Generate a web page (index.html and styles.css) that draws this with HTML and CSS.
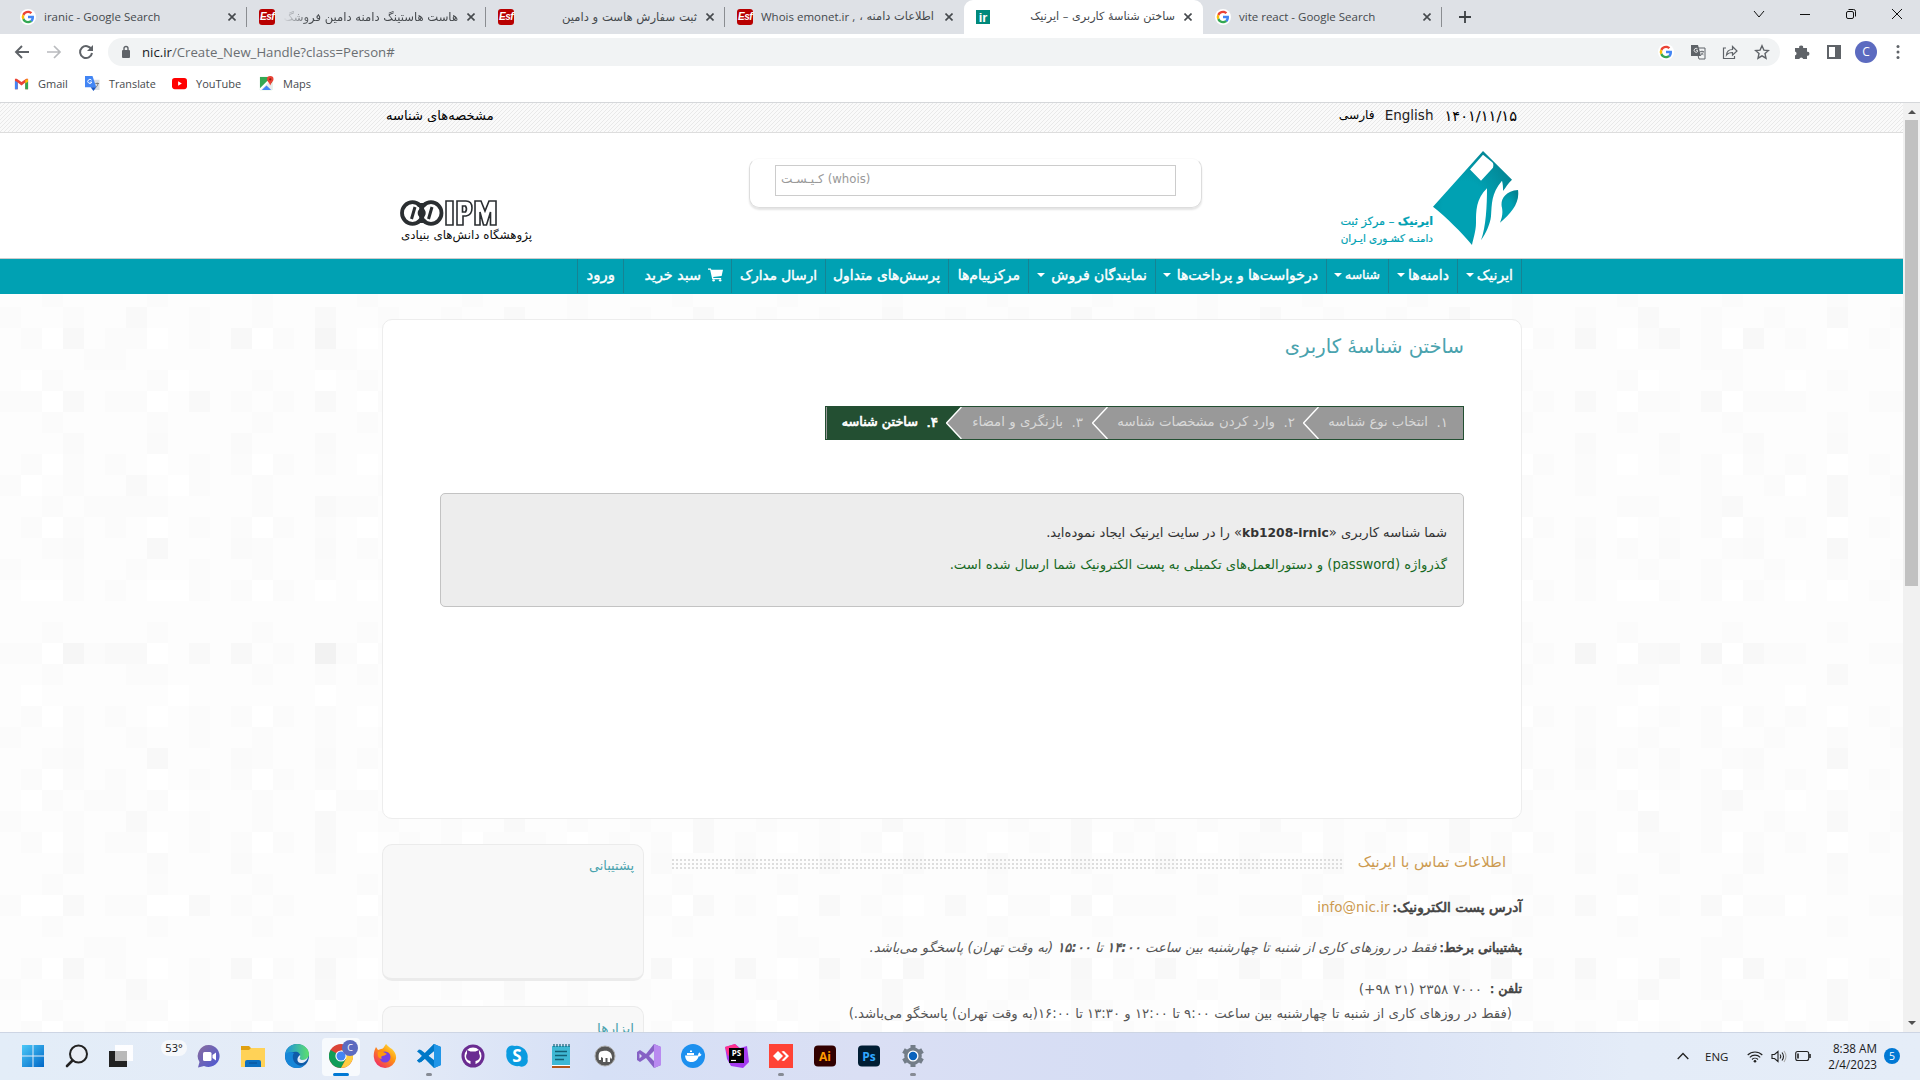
FILE: index.html
```html
<!DOCTYPE html>
<html lang="fa">
<head>
<meta charset="utf-8">
<title>ساختن شناسهٔ کاربری – ایرنیک</title>
<link rel="stylesheet" href="styles.css">
</head>
<body>
<svg width="0" height="0" class="defs">
  <symbol id="g" viewBox="0 0 48 48"><path fill="#fff" d="M24 0a24 24 0 1 0 0 48a24 24 0 0 0 0-48"/><path fill="#EA4335" d="M24 12c3 0 5.600 1 7.700 3l5-5C33.500 7 29 5 24 5 16.500 5 10 9.300 7 15.600l6 4.600C14.500 15.500 18.800 12 24 12z"/><path fill="#4285F4" d="M42 24.500c0-1.500-.1-2.700-.4-4H24v7.600h10.300c-.3 2-1.500 4.500-4 6.300l6 4.600c3.500-3.300 5.700-8.200 5.700-14.500z"/><path fill="#FBBC05" d="M13 27.800a12 12 0 0 1 0-7.600l-6-4.600a19 19 0 0 0 0 16.800z"/><path fill="#34A853" d="M24 43c5 0 9.300-1.700 12.300-4.500l-6-4.600c-1.600 1.100-3.700 1.900-6.300 1.900-5 0-9.500-3.300-11-8l-6 4.600C10 38.700 16.500 43 24 43z"/></symbol>
  <symbol id="x" viewBox="0 0 8 8"><path d="M.5.5l7 7M7.500.5l-7 7" stroke="#45494d" stroke-width="1.600"/></symbol>
  <symbol id="tr" viewBox="0 0 16 16"><path d="M6 4h9v11H9z" fill="none" stroke="#5f6368"/><path d="M1 1h7l3 11H1z" fill="#5f6368"/><path d="M7.500 4.800a2 2 0 1 0 0 3V6.300H6" stroke="#fff" fill="none" stroke-width=".8"/><path d="M10 7.500h4M12 6.500v1M11 11c1.500-.8 2-1.700 2.200-3M11 8.500c.6 1.200 1.500 2 2.500 2.300" stroke="#5f6368" fill="none" stroke-width=".8"/></symbol>
</svg>

<div class="tabs">
  <div class="tab"><svg class="fav"><use href="#g"/></svg><span class="tt"><span class="m en">iranic - Google Search</span></span><svg class="cl"><use href="#x"/></svg></div>
  <div class="tab"><b class="fav esf">Esf</b><span class="tt rtl fade"><span class="m fa">هاست هاستینگ دامنه دامین فروشگ</span></span><svg class="cl"><use href="#x"/></svg></div>
  <div class="tab"><b class="fav esf">Esf</b><span class="tt rtl"><span class="m fa">ثبت سفارش هاست و دامین</span></span><svg class="cl"><use href="#x"/></svg></div>
  <div class="tab nosep"><b class="fav esf">Esf</b><span class="tt"><span class="m en">Whois emonet.ir ,</span><span class="m fa mix" dir="rtl">اطلاعات دامنه ،</span></span><svg class="cl"><use href="#x"/></svg></div>
  <div class="tab nosep on"><b class="fav irf">ir</b><span class="tt rtl"><span class="m fa t5">ساختن شناسهٔ کاربری – ایرنیک</span></span><svg class="cl"><use href="#x"/></svg></div>
  <div class="tab"><svg class="fav"><use href="#g"/></svg><span class="tt"><span class="m en">vite react - Google Search</span></span><svg class="cl"><use href="#x"/></svg></div>
  <svg class="plus" viewBox="0 0 12 12"><path d="M6 0v12M0 6h12" stroke="#3c4043" stroke-width="1.800"/></svg>
  <div class="win">
    <svg viewBox="0 0 12 12"><path d="M1 3l5 6 5-6" fill="none" stroke="#111"/></svg>
    <svg viewBox="0 0 12 12"><path d="M1 6.500h10" stroke="#111"/></svg>
    <svg viewBox="0 0 12 12"><rect x="1.500" y="3.500" width="7" height="7" rx="1.500" fill="none" stroke="#111"/><path d="M3.500 1.500h5a2 2 0 0 1 2 2v5" fill="none" stroke="#111"/></svg>
    <svg viewBox="0 0 12 12"><path d="M1 1l10 10M11 1L1 11" stroke="#111"/></svg>
  </div>
</div>

<div class="tools">
  <svg class="ti" viewBox="0 0 16 16"><path d="M15 8H2M8 2L2 8l6 6" fill="none" stroke="#5f6368" stroke-width="1.900"/></svg>
  <svg class="ti" viewBox="0 0 16 16"><path d="M1 8h13M8 2l6 6-6 6" fill="none" stroke="#b9bbbe" stroke-width="1.700"/></svg>
  <svg class="ti" viewBox="0 0 16 16"><path d="M13.500 5.500A6 6 0 1 0 14 9" fill="none" stroke="#5f6368" stroke-width="2"/><path d="M15 1v6H9z" fill="#5f6368"/></svg>
  <div class="omni">
    <svg class="lock" viewBox="0 0 10 14"><rect x="1" y="5" width="8" height="8" rx="1" fill="#5f6368"/><path d="M3 5V3.500a2 2 0 0 1 4 0V5" fill="none" stroke="#5f6368" stroke-width="1.400"/></svg>
    <span class="m en url"><i>nic.ir</i>/Create_New_Handle?class=Person#</span>
    <svg class="oi"><use href="#g"/></svg>
    <svg class="oi"><use href="#tr"/></svg>
    <svg class="oi" viewBox="0 0 16 16"><path d="M4 4H1.500v10.500h11V12M4.500 11c.3-4 2.500-5.500 6-5.500V2.500L15 7l-4.500 4.200V8.500C8 8.500 6 9 4.500 11z" fill="none" stroke="#5f6368" stroke-width="1.200"/></svg>
    <svg class="oi" viewBox="0 0 16 16"><path d="M8 1.800l1.900 4.300 4.600.4-3.500 3.100 1 4.600L8 11.800l-4 2.400 1-4.600L1.500 6.500l4.600-.4z" fill="none" stroke="#5f6368" stroke-width="1.400"/></svg>
  </div>
  <div class="ext">
    <svg class="oi" viewBox="0 0 16 16"><path fill="#5f6368" d="M1 4h4.200a2 2 0 1 1 3.900 0H13v3.800a2 2 0 1 1 0 3.900V15H9.200a2 2 0 0 0-3.900 0H1v-3.500a2 2 0 0 0 0-3.900z"/></svg>
    <svg class="oi" viewBox="0 0 16 16"><path fill="#5f6368" d="M1 1h14v14H1zM3 3v10h6V3z" fill-rule="evenodd"/></svg>
    <b class="ava">C</b>
    <svg class="oi" viewBox="0 0 16 16"><g fill="#5f6368"><circle cx="8" cy="2.500" r="1.500"/><circle cx="8" cy="8" r="1.500"/><circle cx="8" cy="13.500" r="1.500"/></g></svg>
  </div>
</div>

<div class="marks en">
  <a><svg viewBox="0 0 16 16"><path d="M1 3v11h3V7l4 3 4-3v7h3V3h-2L8 6.500 3 3z" fill="#ea4335"/><path d="M1 5v9h3V7z" fill="#4285f4"/><path d="M15 5v9h-3V7z" fill="#34a853"/><path d="M12 4v4l3-2V3.500z" fill="#fbbc04"/></svg>Gmail</a>
  <a class="b2"><svg viewBox="0 0 16 16"><path d="M5 4h10.500v11H9z" fill="#dadce0"/><path d="M0 0h8l4 12H0z" fill="#4285f4"/><path d="M6 12h6l-3 4z" fill="#1a57c4"/><path d="M7 4.500a2.200 2.200 0 1 0 .3 2H5" stroke="#fff" fill="none"/><path d="M11 8h4M13 7v1M11.500 12c1.500-1 2-2 2.200-4" stroke="#777" fill="none"/></svg>Translate</a>
  <a class="b3"><svg viewBox="0 0 16 16"><rect y="2" width="16" height="12" rx="3" fill="#f00"/><path d="M6.500 5.500v5l4-2.500z" fill="#fff"/></svg>YouTube</a>
  <a class="b4"><svg viewBox="0 0 16 16"><path d="M1 1h13v14H1z" fill="#34a853"/><path d="M1 15L11 5l3 3v7z" fill="#e8eaed"/><path d="M3 15l5-5 5 5z" fill="#4285f4"/><path d="M1 13L9 5l1.500 1.500L2 15H1z" fill="#fff"/><path d="M12 0a3.500 3.500 0 0 0-3.500 3.500C8.500 6 11 7 12 10c1-3 3.500-4 3.500-6.500A3.500 3.500 0 0 0 12 0z" fill="#ea4335"/><circle cx="12" cy="3.500" r="1.200" fill="#8c1d14"/></svg>Maps</a>
</div>

<div class="view">
 <div class="page" dir="rtl">
  <div class="strip"><div class="wrap">
    <span class="m d1">۱۴۰۱/۱۱/۱۵</span><span class="m d2">English</span><span class="m d3">فارسی</span><span class="m d4">مشخصه‌های شناسه</span>
  </div></div>
  <div class="head"><div class="wrap">
    <div class="logo">
      <svg viewBox="0 0 86 101" width="86" height="94" preserveAspectRatio="none"><defs><radialGradient id="lg" cx=".4" cy=".6" r=".7"><stop offset=".4" stop-color="#00a1b3"/><stop offset="1" stop-color="#048391"/></radialGradient></defs><path fill="url(#lg)" d="M50 0L79 31C75 35 73 39 70 43C70 39 70 36 69 32C58 46 59 57 58 70C57 79 53 88 48 96C53 82 54 58 54 40C43 51 43 65 43 77C43 86 40 95 39 101C28 87 14 72 0 60z"/><path fill="#fff" d="M50 4L37 20L48 32L60 18C61 14 60 12 58 11z"/><path fill="url(#lg)" d="M85 42C71 43 67 54 69 61C70 67 69 72 67 77C78 67 87 56 85 42z"/></svg>
      <div class="ltx"><span class="m l1"><b>ایرنیک</b> – مرکز ثبت</span><span class="m l2">دامنـه کشـوری ایـران</span></div>
    </div>
    <div class="sbox"><div class="inp" dir="ltr"><span class="m s1" dir="rtl">کـیـسـت</span><span class="m s2">(whois)</span></div></div>
    <div class="ipm">
      <svg viewBox="0 0 98 26" width="98" height="26"><g fill="none" stroke="#2a2e31" stroke-width="3.800"><ellipse cx="12.500" cy="13" rx="10.500" ry="10.800"/><ellipse cx="31" cy="13" rx="10.500" ry="10.800"/></g><path d="M15 3h13l-3 4h-7zM16 23h12l-3-4h-6z" fill="#2a2e31"/><circle cx="21.700" cy="13" r="4" fill="#2a2e31"/><path d="M15 7l-3.500 12M32 7l-3.500 12" stroke="#2a2e31" stroke-width="3"/><g fill="#fff" stroke="#2a2e31" stroke-width="1.600"><path d="M46 1h7v24h-7zM57 1h9q6 0 6 7t-6 8h-3v9h-6zM62.500 6v6h3q2-3 0-6zM75 1h6l4 10 4-10h7v24h-5.500V12L86.500 25h-3L80 12v13h-5z"/></g></svg>
      <span class="m ip">پژوهشگاه دانش‌های بنیادی</span>
    </div>
  </div></div>
  <div class="nav"><div class="wrap">
    <a class="n1"><span class="m">ایرنیک</span><i></i></a><a class="n2"><span class="m">دامنه‌ها</span><i></i></a><a class="n3"><span class="m">شناسه</span><i></i></a><a class="n4"><span class="m">درخواست‌ها و پرداخت‌ها</span><i></i></a><a class="n5"><span class="m">نمایندگان فروش</span><i></i></a><a class="n6"><span class="m">مرکزپیام‌ها</span></a><a class="n7"><span class="m">پرسش‌های متداول</span></a><a class="n8"><span class="m">ارسال مدارک</span></a><a class="n9"><svg viewBox="0 0 16 14"><path fill="#fff" d="M0 0h3l.6 1.500H16L14.500 8l-9 1 .3 1.200H14v1.200H4.500L2.300 1.300H0z"/><circle cx="6" cy="12.700" r="1.300" fill="#fff"/><circle cx="13" cy="12.700" r="1.300" fill="#fff"/></svg><span class="m">سبد خرید</span></a><a class="n10"><span class="m">ورود</span></a>
  </div></div>
  <div class="body">
   <div class="card">
    <h1><span class="m">ساختن شناسهٔ کاربری</span></h1>
    <div class="steps">
      <div class="st s-a"><span class="no">۱.</span><span class="m">انتخاب نوع شناسه</span></div><svg class="ar" viewBox="0 0 16 32"><path d="M15.500 0L.5 16l15 16" fill="none" stroke="#fff" stroke-width="1.500"/></svg>
      <div class="st s-b"><span class="no">۲.</span><span class="m">وارد کردن مشخصات شناسه</span></div><svg class="ar" viewBox="0 0 16 32"><path d="M15.500 0L.5 16l15 16" fill="none" stroke="#fff" stroke-width="1.500"/></svg>
      <div class="st s-c"><span class="no">۳.</span><span class="m">بازنگری و امضاء</span></div><svg class="ar" viewBox="0 0 16 32"><path d="M0 0h16L.5 16 16 32H0z" fill="#234f32"/><path d="M15.500 0L.5 16l15 16" fill="none" stroke="#fff" stroke-width="1.500"/></svg>
      <div class="st s-d"><span class="no">۴.</span><span class="m">ساختن شناسه</span></div>
    </div>
    <div class="msg">
      <p><span class="m">شما شناسه کاربری «<b>kb1208-irnic</b>» را در سایت ایرنیک ایجاد نموده‌اید.</span></p>
      <p class="gr"><span class="m">گذرواژه (password) و دستورالعمل‌های تکمیلی به پست الکترونیک شما ارسال شده است.</span></p>
    </div>
   </div>
   <div class="low">
    <div class="info">
      <h2><span class="m">اطلاعات تماس با ایرنیک</span><i class="dots"></i></h2>
      <p><b class="m c1">آدرس پست الکترونیک:</b><span class="m mail">info@nic.ir</span></p>
      <p><b class="m c2">پشتیبانی برخط:</b><span class="m it">فقط در روزهای کاری از شنبه تا چهارشنبه بین ساعت <b>۱۴:۰۰</b> تا <b>۱۵:۰۰</b> (به وقت تهران) پاسخگو می‌باشد.</span></p>
      <p><b class="m c3">تلفن :</b><span class="m ph" dir="ltr">(+۹۸ ۲۱) ۲۳۵۸ ۷۰۰۰</span></p>
      <p class="last"><span class="m">(فقط در روزهای کاری از شنبه تا چهارشنبه بین ساعت ۹:۰۰ تا ۱۲:۰۰ و ۱۳:۳۰ تا ۱۶:۰۰(به وقت تهران) پاسخگو می‌باشد.)</span></p>
    </div>
    <div class="side"><div class="sc"><span class="m">پشتیبانی</span></div><div class="sc sc2"><span class="m">ابزارها</span></div></div>
   </div>
  </div>
 </div>
 <div class="sb"><i class="up"></i><div class="th"></div><i class="dn"></i></div>
</div>

<div class="task en">
  <div class="ic"><svg viewBox="0 0 24 24"><defs><linearGradient id="w" x2="1" y2="1"><stop stop-color="#4cc9f8"/><stop offset="1" stop-color="#0067c7"/></linearGradient></defs><path fill="url(#w)" d="M1 1h10.500v10.500H1zM12.500 1H23v10.500H12.500zM1 12.500h10.500V23H1zM12.500 12.500H23V23H12.500z"/></svg></div>
  <div class="ic"><svg viewBox="0 0 24 24"><circle cx="13.500" cy="10" r="8.500" fill="#e9edf4" stroke="#222" stroke-width="2"/><path d="M7.500 16.500L2 22" stroke="#222" stroke-width="2.600" stroke-linecap="round"/></svg></div>
  <div class="ic"><svg viewBox="0 0 24 24"><path d="M0 7h18v16H0z" fill="#222"/><path d="M6 1h18v16H6z" fill="#fff" opacity=".9"/><path d="M6 7h12v10H6z" fill="#b9b9b9"/></svg></div>
  <div class="ic wx"><span>53°</span></div>
  <div class="ic"><svg viewBox="0 0 24 24"><defs><linearGradient id="ch" x2="1" y2="1"><stop stop-color="#8a6d9c"/><stop offset="1" stop-color="#4a57d6"/></linearGradient></defs><path fill="url(#ch)" d="M12 1a11 11 0 1 1-5 21l-6 1.500L2.500 18A11 11 0 0 1 12 1z"/><rect x="6" y="8" width="8.500" height="9" rx="1.500" fill="#fff"/><path d="M15.500 11l3.500-2.500v8L15.500 14z" fill="#fff"/></svg></div>
  <div class="ic"><svg viewBox="0 0 24 24"><path d="M0 2h8l3 3h13v6H0z" fill="#e0a010"/><path d="M0 6h8l2-2h14v19H0z" fill="#ffd257"/><path d="M4 23v-5q0-2 2-2h12q2 0 2 2v5z" fill="#0c6fc0"/><path d="M8 19h8" stroke="#0a4f92"/></svg></div>
  <div class="ic"><svg viewBox="0 0 24 24"><defs><linearGradient id="ed" x2="1"><stop stop-color="#1b8fe0"/><stop offset="1" stop-color="#5ee06c"/></linearGradient></defs><circle cx="12" cy="12" r="12" fill="#0f5ba8"/><path d="M0 12C0 5 5 0 12 0s12 5 12 10c0 4-3 6-6 6-2 0-4-1-3-3 1-4-3-6-6-5-4 0-8 2-9 4z" fill="url(#ed)"/><path d="M0 12c1-4 6-5 9-3-2 2-2 9 4 12 2 1 5 1 7-1-2 3-5 4-8 4C5 24 0 19 0 12z" fill="#1686d8"/><path d="M15 11c1 2-1 3 0 4 2 2 6 1 8-2-1 4-4 6-7 6-4 0-5-5-1-8z" fill="#e4ecf7"/></svg></div>
  <div class="ic act"><svg viewBox="0 0 24 24"><circle cx="12" cy="12" r="12" fill="#db4437"/><path d="M1.600 6A12 12 0 0 0 12 24l5-9-5-3z" fill="#0f9d58"/><path d="M12 24A12 12 0 0 0 22.400 6H12l5 9z" fill="#ffcd40"/><circle cx="12" cy="12" r="5.600" fill="#fff"/><circle cx="12" cy="12" r="4.500" fill="#4285f4"/></svg><b class="bd">C</b><u class="run on"></u></div>
  <div class="ic"><svg viewBox="0 0 24 24"><defs><linearGradient id="ff" x1="1" y1="0" x2=".2" y2="1"><stop stop-color="#fff44f"/><stop offset=".45" stop-color="#ff980e"/><stop offset="1" stop-color="#f0256b"/></linearGradient></defs><path fill="url(#ff)" d="M13 0c3 3 4 4 6 5 3 3 4.500 6 4 9.500A11 11 0 0 1 12 24 11.500 11.500 0 0 1 .8 13C.5 9 1.500 6 3 3l2 3 3-1c2 0 3-2 5-5z"/><circle cx="12" cy="13" r="5.500" fill="#7542e5"/><path d="M5 8c3-1 6 0 9 2-2 1-3 2-5 2-1 1-1 2 0 3-3 0-5-3-4-7z" fill="#ff980e"/></svg></div>
  <div class="ic"><svg viewBox="0 0 24 24"><path d="M17 0l7 3v18l-7 3L2 9l-2-1.500 2-2 2 .5 13 10V7L4 18l-2 .5-2-2L2 15z" fill="#0078c8"/><path d="M17 0L2 15l-2 1.500 2 2 2-.5L17 7z" fill="#0078c8"/><path d="M17 0l7 3v18l-7 3z" fill="#2196e8"/></svg><u class="run"></u></div>
  <div class="ic"><svg viewBox="0 0 24 24"><circle cx="12" cy="12" r="11.500" fill="#6a2c91"/><circle cx="12" cy="12" r="8.500" fill="#fff"/><path d="M9.500 21v-4c-5-1-5-5-3.500-7.500L6 6l3.500 1.500h5L18 6v3.500c1.500 2.500 1.500 6.500-3.500 7.500v4z" fill="#6a2c91"/></svg></div>
  <div class="ic"><svg viewBox="0 0 24 24"><path d="M7 1.500A6 6 0 0 0 1.500 9 11 11 0 0 0 14 22a6 6 0 0 0 8.500-7A11 11 0 0 0 10 2z" fill="#0a9be0"/><text x="12" y="18" class="it-s" fill="#fff" font-size="17">S</text></svg></div>
  <div class="ic"><svg viewBox="0 0 24 24"><path d="M3 2h18v19H3z" fill="#3fb8d4"/><path d="M3 21h18v3H3z" fill="#b4571a"/><path d="M3 21h18v1H3z" fill="#fff"/><path d="M5 0v3M8 0v3M11 0v3M14 0v3M17 0v3M20 0v3" stroke="#135f75" stroke-width="1.200"/><path d="M6 7.500h12M6 11.500h12M6 15.500h9" stroke="#135f75" stroke-width="1.400"/></svg></div>
  <div class="ic"><svg viewBox="0 0 24 24"><circle cx="12" cy="12" r="10" fill="#575757" stroke="#aaa"/><path d="M6 16c-1-6 0-9 4-9 5-1 9 1 9 7l-1 1-1-2v5h-2.500v-4h-2v4H10v-4l-2-1v3z" fill="#fff"/></svg></div>
  <div class="ic"><svg viewBox="0 0 24 24"><path d="M17 0l7 3v18l-7 3L9 14l-6 4-3-2V8l3-2 6 4z" fill="#8661c5"/><path d="M17 0l7 3v18l-7 3z" fill="#b98af0"/><path d="M17 7v10l-5-5zM2.500 9.500v5L5 12z" fill="#dbe2f5"/></svg></div>
  <div class="ic"><svg viewBox="0 0 24 24"><circle cx="12" cy="12" r="12" fill="#1d90ef"/><path d="M4 11.500h13c0-2 1-3 2-3 0 1 .5 2 1.500 2-.5 1.500-2 2-3 2-1 4-4 5.500-7 5.500-4 0-6-2-6.500-6.500zM6 9h7v2H6zM9 6.500h2V8H9z" fill="#fff"/></svg></div>
  <div class="ic"><svg viewBox="0 0 24 24"><path d="M0 3l10-3 5 4 7-2 2 16-6 6-12-2-4-7z" fill="#a53cf0"/><path d="M0 3l10-3 4 4-11 8z" fill="#ff318c"/><path d="M4 4h15v15H4z" fill="#000"/><text x="11.500" y="11.500" class="it-s" fill="#fff" font-size="8">PS</text><path d="M6 16.500h5" stroke="#fff" stroke-width="1.200"/></svg></div>
  <div class="ic"><svg viewBox="0 0 24 24"><path d="M0 0h24v24H0z" fill="#ff4336"/><path d="M4 12l5-5 5 5-5 5z" fill="#fff"/><path d="M12.500 7.500L15 7l5 5-5 5-2.500-.5L17 12z" fill="#fff"/></svg><u class="run"></u></div>
  <div class="ic"><svg viewBox="0 0 24 24"><rect x="1" y="1.500" width="22" height="21" rx="4" fill="#310000"/><text x="12" y="16.500" class="it-s" fill="#ff9a00" font-size="12">Ai</text></svg></div>
  <div class="ic"><svg viewBox="0 0 24 24"><rect x="1" y="1.500" width="22" height="21" rx="4" fill="#001d33"/><text x="12" y="16.500" class="it-s" fill="#31a8ff" font-size="12">Ps</text></svg></div>
  <div class="ic"><svg viewBox="0 0 24 24"><circle cx="12" cy="12" r="6.800" fill="none" stroke="#737d88" stroke-width="4"/><g stroke="#737d88" stroke-width="5"><path d="M12 1v3M12 20v3M2.500 6.500L5 8M19 16l2.500 1.500M2.500 17.500L5 16M19 8l2.500-1.500"/></g><circle cx="12" cy="12" r="5.500" fill="#fff"/><circle cx="12" cy="12" r="4.200" fill="#0a63bd"/></svg><u class="run"></u></div>
  <div class="tray">
    <svg class="tc" viewBox="0 0 12 8"><path d="M.7 7L6 1.500 11.300 7" fill="none" stroke="#222" stroke-width="1.300"/></svg>
    <span class="eng">ENG</span>
    <svg class="t1" viewBox="0 0 16 13"><g fill="none" stroke="#222" stroke-width="1.100"><path d="M.7 5a10.300 10.300 0 0 1 14.600 0M2.800 7.300a7.300 7.300 0 0 1 10.400 0M5 9.500a4.300 4.300 0 0 1 6 0"/></g><circle cx="8" cy="11.300" r="1.300" fill="#222"/></svg>
    <svg class="t2" viewBox="0 0 16 13"><g fill="none" stroke="#222" stroke-width="1.100"><path d="M1 4.500h2.500L7 1.500v10L3.500 8.500H1zM9 4.500q1.500 2 0 4M11 2.500q3 4 0 8"/><path d="M13 1q4 5.500 0 11" stroke="#aaa"/></g></svg>
    <svg class="t3" viewBox="0 0 16 12"><rect x=".7" y="1.500" width="13" height="9" rx="2" fill="none" stroke="#222" stroke-width="1.100"/><path d="M3 3.500v5M15 4v4" stroke="#222" stroke-width="1.600"/></svg>
    <div class="clock"><span>8:38 AM</span><span>2/4/2023</span></div>
    <b class="nb">5</b>
  </div>
</div>
</body>
</html>
```
FILE: styles.css
```css
*{box-sizing:border-box}
body{margin:0;width:1920px;height:1080px;overflow:hidden;display:flex;flex-direction:column;font-family:"DejaVu Sans",sans-serif;font-size:12px;color:#333;background:#fff}
.defs{display:none}
svg{flex:none;display:block}
h1,h2,p{margin:0;font-weight:400}
.en{font-family:"Open Sans","Noto Sans",sans-serif}
.m{white-space:nowrap;display:inline-block}

/* browser chrome */
.tabs{height:34px;flex:none;background:#dee1e6;display:flex;padding-left:8px;align-items:center;color:#45494d}
.tab{width:239px;height:34px;display:flex;align-items:center;padding-left:12px;position:relative}
.tab::after{content:"";width:1px;height:20px;background:#8a8d91;margin-left:auto}
.nosep::after{display:none}
.tab .m{margin-top:-1px}
.tab .en{font-size:11.500px}
.tab .fa{font-size:11.600px}
.tab .t5{font-size:11.250px}
.tab .mix{margin-left:4px;font-size:11.400px}
.fav{width:16px;height:16px;flex:none}
.esf{background:#b80000;border-radius:3px;color:#fff;font:italic bold 10px/16px "Liberation Sans",sans-serif;text-align:center;letter-spacing:-.5px}
.irf{background:#00897b;color:#fff;font:bold 13px/15px "Liberation Sans",sans-serif;text-align:center;height:14px;width:14px;margin-right:2px}
.tt{width:175px;margin-left:8px;display:flex;white-space:nowrap}
.rtl{direction:rtl}
.fade{-webkit-mask-image:linear-gradient(to right,transparent,#000 28px)}
.cl{width:8px;height:8px;margin-left:9px}
.on{background:#fff;border-radius:9px 9px 0 0}
.plus{width:12px;height:12px;margin-left:17px}
.win{display:flex;margin-left:auto;gap:34px;padding:0 17px 6px 0}
.win svg{width:12px;height:12px}
.tools{height:36px;flex:none;display:flex;align-items:center;padding-left:14px;background:#fff}
.ti{width:16px;height:16px;margin-right:16px}
.omni{width:1672px;height:28px;margin-left:-2px;border-radius:14px;background:#f1f3f4;display:flex;align-items:center;padding:0 10px 0 13px;color:#6a6e72}
.lock{width:10px;height:14px;margin-right:11px}
.url{font-size:13.200px;margin-right:auto}
.url i{font-style:normal;color:#202124}
.oi{width:16px;height:16px;flex:none}
.omni .oi{margin-left:16px}
.ext{display:flex;align-items:center;gap:16px;margin-left:14px}
.ava{width:22px;height:22px;border-radius:50%;background:#5c6bc0;color:#fff;font:12px/22px "Open Sans",sans-serif;text-align:center;margin:0 -3px}
.marks{height:33px;flex:none;border-bottom:1px solid #d5d7da;display:flex;align-items:center;padding:0 0 5px 14px;color:#45494d;font-size:11px}
.marks a{display:flex;align-items:center;width:71px}
.marks svg{width:15px;height:15px;margin-right:9px}
.marks .b2{width:87px;font-size:10.800px}
.marks .b3{width:87px}

/* site */
.view{flex:1;min-height:0;display:flex;overflow:hidden}
.page{width:1903px;overflow:hidden;display:flex;flex-direction:column}
.wrap{width:1140px;margin:0 381px 0 auto;display:flex}
.strip{height:30px;flex:none;border-bottom:1px solid #ddd;background:linear-gradient(135deg,#e9e9e9 12.500%,#fafafa 12.500% 37.500%,#fafafa 50%,#e9e9e9 50% 62.500%,#fafafa 62.500%) 0 0/4px 4px;color:#000}
.strip .wrap{align-items:center;height:24px;padding:0 5px 0 4px}
.d1{font-size:14.600px}
.d2{font-size:13.500px;margin-right:11px;color:#222}
.d3{font-size:12.250px;margin-right:10px}
.d4{font-size:13.100px;margin-right:auto}
.head{height:126px;flex:none;border-bottom:1px solid #ccc}
.head .wrap{padding-right:3px}
.logo{display:flex;padding-top:18px;width:178px;color:#00a1b3}
.ltx{padding-top:63px;width:92px;display:flex;flex-direction:column;-webkit-text-stroke:.2px #00a1b3}
.ltx .m{height:16px;line-height:16px}
.l1{font-size:11.200px}.l2{font-size:10.400px}
.sbox{width:453px;height:50px;margin:25px 139px 0 217px;border:1px solid #ddd;border-top-color:#fafafa;border-radius:10px;box-shadow:0 2px 2px #e4e4e4;padding:6px 25px 0}
.inp{width:401px;height:31px;border:1px solid #ccc;display:flex;align-items:center;padding:0 5px 3px;color:#999;gap:4px}
.s1{font-size:12.100px}.s2{font-size:11.700px}
.ipm{width:132px;padding-top:67px;color:#111}
.ipm svg{margin-right:34px}
.ip{font-size:11.850px;line-height:18px}
.nav{height:35px;flex:none;background:#00a1b3;color:#fff}
.nav a{height:34px;border-left:1px solid #178393;display:flex;align-items:center;padding:0 8px 3px 0;flex:none;font-size:14px;-webkit-text-stroke:.4px #fff}
.nav i{border:4px solid transparent;border-top:4px solid #fff;border-bottom:0;margin-right:3px}
.nav a.n1{width:65px;border-right:1px solid #178393}.nav .n2{width:69px}.nav .n3{width:62px;font-size:12.400px}.nav .n4{width:171px}.nav .n5{width:127px}.nav .n6{width:80px}.nav .n7{width:123px;font-size:13.850px}.nav .n8{width:94px;font-size:13.600px}.nav .n9{width:108px;font-size:14.300px;gap:7px}.nav .n10{width:46px;font-size:15px}
.nav .n4 i,.nav .n5 i{margin-right:6px}
.n9 svg{width:15px;height:14px}
.body{flex:1;padding-top:25px;background:
 conic-gradient(at 21px 21px,transparent 75%,rgba(0,0,0,.009) 0) 0 13px/63px 84px,
 conic-gradient(at 21px 21px,transparent 75%,#fff 0) 42px 34px/105px 63px,
 conic-gradient(at 21px 21px,transparent 75%,#fff 0) 21px 76px/147px 105px,
 conic-gradient(at 21px 21px,transparent 75%,rgba(0,0,0,.01) 0) 63px 34px/84px 105px,
 conic-gradient(at 42px 21px,transparent 75%,rgba(0,0,0,.009) 0) 84px 55px/231px 147px,
 conic-gradient(at 21px 42px,transparent 75%,rgba(0,0,0,.009) 0) 126px 13px/189px 168px,
 conic-gradient(at 21px 21px,transparent 75%,rgba(0,0,0,.008) 0) 42px 76px/105px 42px,
 conic-gradient(at 21px 21px,transparent 75%,rgba(0,0,0,.006) 0) 21px 34px/42px 63px,
 #fdfdfd}
.card{width:1140px;height:500px;margin:0 381px 0 auto;background:#fff;border:1px solid #ededed;border-radius:10px;padding:7px 57px 0}
h1{height:40px;line-height:40px;color:#4aa3ae;font-size:19.600px}
.steps{width:639px;height:34px;margin-top:39px;border:1px solid #234f32;display:flex;background:#999;color:#d8d8d8}
.st{display:flex;align-items:center;padding-bottom:3px;flex:none}
.no{width:11px;font-size:13.500px;margin-left:9px;white-space:nowrap}
.s-a{width:144px;padding-right:15px;font-size:13.150px}
.s-b{width:195px;padding-right:8px;font-size:13.300px}
.s-c{width:130px;padding-right:9px;font-size:13.350px}
.s-d{width:119px;padding-right:8px;background:#234f32;color:#fff;font-size:12.800px;-webkit-text-stroke:.7px #fff}
.ar{width:16px;height:32px}
.msg{width:1024px;height:114px;margin-top:53px;background:#ededed;border:1px solid #c3c3c3;border-radius:5px;padding:23px 16px 0;font-size:13.170px;color:#333}
.msg b{font-size:12.300px}
.msg p{height:32px;line-height:32px}
.msg .gr{color:#17691f}
.low{width:1140px;margin:25px 381px 0 auto;display:flex;justify-content:space-between;color:#555}
.info{width:850px}
h2{display:flex;align-items:center;height:34px;padding-right:16px;color:#cc9a50;font-size:14.800px;gap:14px}
.dots{width:672px;height:10px;margin-top:6px;background:conic-gradient(at 2px 2px,transparent 75%,#ddd 0) 0 0/4px 4px}
.info p{height:41px;display:flex;align-items:center}
.info h2+p{margin-top:8px}
.info b.m{font-weight:400;-webkit-text-stroke:.7px #444;color:#444}
.c1{font-size:13.650px}.c2{font-size:12.600px}.c3{font-size:12.600px}
.mail{font-size:13.500px;color:#cc9a50;margin-right:3px}
.it{font-style:italic;font-size:13.220px;margin-right:3px}
.ph{font-size:13.700px;margin-right:8px}
.info .last{height:20px;margin-top:-6px;padding-right:10px;font-size:13.280px}
.side{width:262px}
.sc{height:137px;background:#f8f8f8;border:1px solid #ebebeb;border-bottom-width:3px;border-radius:10px;margin-bottom:25px;padding:13px 9px;color:#4aa3ae;font-size:12.900px}
.sc2{font-size:13.700px}
.sb{width:17px;background:#f1f1f1;display:flex;flex-direction:column;align-items:center;padding:7px 0}
.sb i{border:4px solid transparent;flex:none}
.sb .up{border-bottom:4px solid #505050;border-top:0}
.sb .dn{border-top:4px solid #505050;border-bottom:0;margin-top:auto}
.th{width:13px;height:466px;background:#c1c1c1;margin-top:6px;flex:none}

/* taskbar */
.task{height:48px;flex:none;border-top:1px solid #cdd5e4;background:linear-gradient(90deg,#e3edf8,#e4ebf7 20%,#d6e0f6 31%,#dadff4 45%,#d5ddf4 62%,#e4ecf8 85%,#e5edf8);display:flex;padding-left:11px;align-items:center}
.ic{width:44px;height:46px;display:flex;align-items:center;justify-content:center;position:relative;flex:none;padding-bottom:1px}
.ic svg{width:24px;height:24px}
.it-s{font-family:"Open Sans",sans-serif;font-weight:700;text-anchor:middle}
.wx{padding:0 0 17px 18px}
.wx span{background:#f6f8fb;border-radius:8px;padding:0 4px;line-height:16px;font-size:11px;color:#111}
.act::before{content:"";position:absolute;inset:4px 3px;background:#f7fafd;border-radius:4px}
.act svg{position:relative}
.bd{position:absolute;left:23px;top:6px;width:16px;height:16px;border-radius:50%;background:#5c6bc0;color:#fff;font:9px/16px "Open Sans",sans-serif;text-align:center}
.run{position:absolute;bottom:4px;left:19px;width:6px;height:3px;border-radius:2px;background:#868b94}
.run.on{left:14px;width:16px;background:#0078d4}
.tray{display:flex;align-items:center;margin-left:auto;padding:0 20px 1px 0;color:#1b1b1b}
.tc{width:12px;height:8px;margin-right:16px}
.eng{font-size:11.500px;width:42px}
.t1{width:16px;height:13px;margin-right:8px}
.t2{width:16px;height:13px;margin-right:8px}
.t3{width:16px;height:12px}
.clock{width:66px;display:flex;flex-direction:column;align-items:flex-end;font-size:11.700px;line-height:16px}
.nb{width:16px;height:16px;border-radius:50%;background:#0078d4;color:#fff;font:10.500px/16px "Open Sans",sans-serif;text-align:center;margin-left:7px}
```
